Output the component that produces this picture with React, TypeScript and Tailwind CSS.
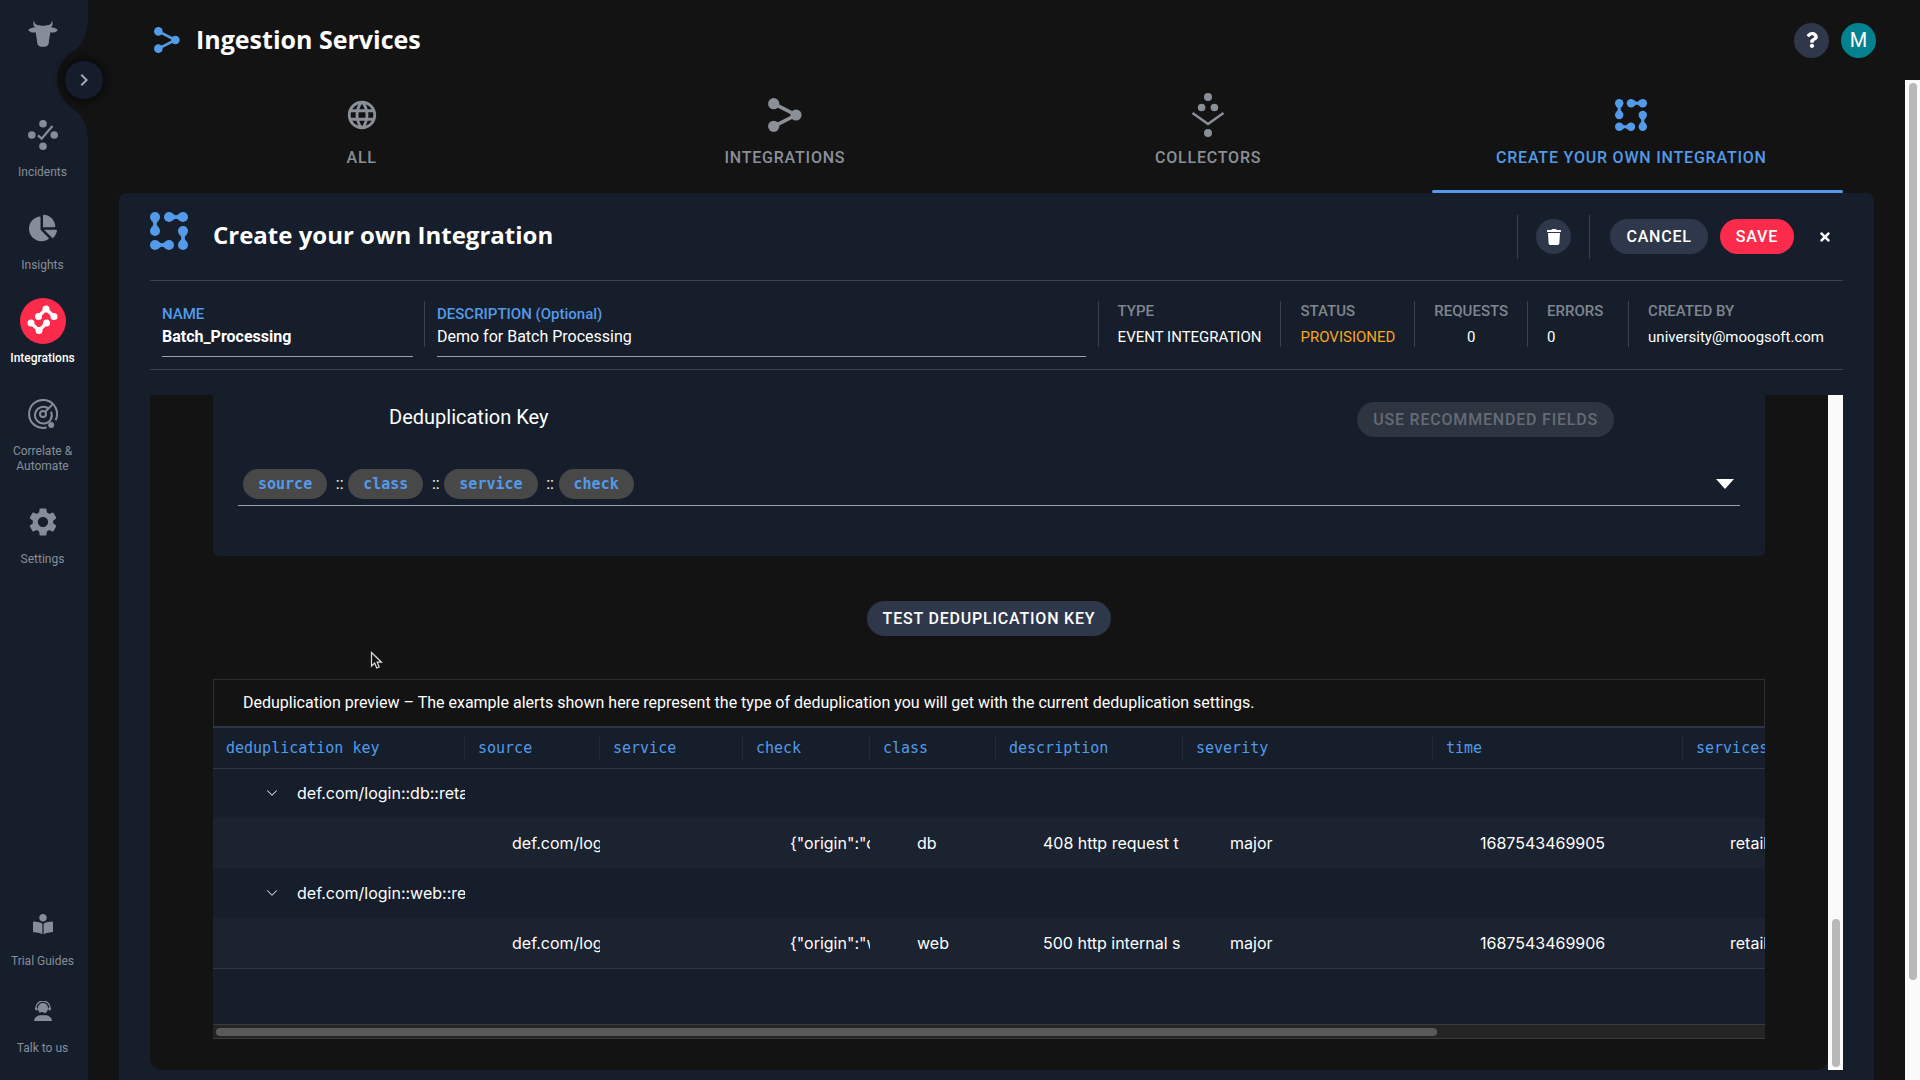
import React from "react";
import { FaBookReader, FaChartPie, FaQuestion, FaTimes, FaTrash } from "react-icons/fa";
import { MdChevronRight, MdLanguage, MdSettings } from "react-icons/md";
import { BsChevronDown } from "react-icons/bs";

function BullLogo() {
  return (
    <svg width="30" height="28" viewBox="0 0 30 28" fill="currentColor" aria-hidden="true">
      <path d="M6 0.5C4.6 4 5.6 6.6 7.6 7.2C6 7.2 4.6 7.4 3.4 8C1.8 8.6 .6 9.4 .3 10C2 12.6 5 13 7.6 12.2C8.2 15.6 9 20 9.3 23.4C9.6 25.8 12 26.8 15 26.8C18 26.8 20.4 25.8 20.7 23.4C21 20 21.8 15.6 22.4 12.2C25 13 28 12.6 29.7 10C29.4 9.4 28.2 8.6 26.6 8C25.4 7.4 24 7.2 22.4 7.2C24.4 6.6 25.4 4 24 .5C23.6 3 22.6 4.6 20.6 5C18.4 5.4 17 5.8 15 5.8C13 5.8 11.6 5.4 9.4 5C7.4 4.6 6.4 3 6 .5Z" />
    </svg>
  );
}

function IncidentsIcon() {
  return (
    <svg width="30" height="30" viewBox="0 0 30 30" fill="currentColor" aria-hidden="true">
      <circle cx="15" cy="3.8" r="3.8" />
      <circle cx="3.8" cy="15" r="3.8" />
      <circle cx="26.2" cy="15" r="3.8" />
      <circle cx="15" cy="26.2" r="3.8" />
      <path d="M10 15.4L13.6 18.6L24.5 6" fill="none" stroke="currentColor" strokeWidth="2.2" />
    </svg>
  );
}

function IntegrationsBadge() {
  return (
    <svg width="46" height="46" viewBox="0 0 46 46" aria-hidden="true">
      <circle cx="23" cy="23" r="23" fill="#fc2b4b" />
      <g fill="#fff" stroke="#fff" strokeWidth="3.4" strokeLinejoin="round">
        <path d="M18.5 18.5L26 11L34 18.5" fill="none" />
        <path d="M11 25L19 32.5L26.5 25" fill="none" />
        <circle cx="18.5" cy="18.5" r="1.8" />
        <circle cx="26" cy="11" r="1.8" />
        <circle cx="34" cy="18.5" r="1.8" />
        <circle cx="11" cy="25" r="1.8" />
        <circle cx="19" cy="32.5" r="1.8" />
        <circle cx="26.5" cy="25" r="1.8" />
      </g>
    </svg>
  );
}

function RadarIcon() {
  return (
    <svg width="30" height="30" viewBox="0 0 30 30" fill="none" stroke="currentColor" strokeWidth="2" aria-hidden="true">
      <path d="M18.6 28.5A14 14 0 1 1 27.6 21.2" />
      <path d="M20.6 9.6A8.4 8.4 0 1 0 23 12.6" />
      <circle cx="15" cy="15" r="3" />
      <path d="M17.2 12.8L24.6 5.4" />
      <circle cx="23.2" cy="26" r="3" fill="currentColor" stroke="none" />
    </svg>
  );
}

function AgentIcon() {
  return (
    <svg width="18" height="20" viewBox="0 0 18 20" fill="currentColor" aria-hidden="true">
      <path d="M0 20C.3 16.4 3 14.6 6 14.2H12C15 14.6 17.7 16.4 18 20Z" />
      <path d="M2 8.5V7A7 7 0 0 1 16 7V9" fill="none" stroke="currentColor" strokeWidth="1.3" />
      <path d="M4 7A5 5 0 0 1 14 7C14 9 13 11 11.5 12H9.5V11H7L6 12C4.6 11 4 9 4 7Z" />
      <circle cx="2.4" cy="8" r="1.4" />
      <circle cx="15.6" cy="8" r="1.4" />
    </svg>
  );
}

function FlowIcon({ className }: { className: string }) {
  return (
    <svg className={className} viewBox="0 0 34 34" fill="currentColor" aria-hidden="true">
      <path d="M5.7 5.7L28 17L5.7 28.3" fill="none" stroke="currentColor" strokeWidth="3.6" />
      <circle cx="5.7" cy="5.7" r="5.6" />
      <circle cx="28" cy="17" r="5.6" />
      <circle cx="5.7" cy="28.3" r="5.6" />
    </svg>
  );
}

function CollectorIcon() {
  return (
    <svg width="34" height="44" viewBox="0 0 34 44" fill="currentColor" aria-hidden="true">
      <circle cx="17" cy="4" r="4" />
      <circle cx="10.6" cy="14.5" r="3.8" />
      <circle cx="23.4" cy="14.5" r="3.8" />
      <path d="M1.5 20L17 31L32.5 20" fill="none" stroke="currentColor" strokeWidth="2.5" />
      <circle cx="17" cy="40" r="4" />
    </svg>
  );
}

function CustomIcon({ className }: { className: string }) {
  return (
    <svg className={className} viewBox="0 0 38 38" fill="currentColor" aria-hidden="true">
      <circle cx="5" cy="5" r="5" />
      <circle cx="5" cy="19" r="5" />
      <path d="M1 8C4 11 4 13 1 16H9C6 13 6 11 9 8Z" />
      <circle cx="19" cy="5" r="5" />
      <circle cx="33" cy="5" r="5" />
      <path d="M22 1C25 4 27 4 30 1V9C27 6 25 6 22 9Z" />
      <circle cx="33" cy="19" r="5" />
      <circle cx="33" cy="33" r="5" />
      <path d="M29 22C32 25 32 27 29 30H37C34 27 34 25 37 22Z" />
      <circle cx="5" cy="33" r="5" />
      <circle cx="19" cy="33" r="5" />
      <path d="M8 29C11 32 13 32 16 29V37C13 34 11 34 8 37Z" />
    </svg>
  );
}

function NavItem({ icon, label, active, small }: { icon: React.ReactNode; label: string; active?: boolean; small?: boolean }) {
  return (
    <a
      href="#"
      className={
        "flex w-full flex-col items-center text-center text-xs leading-[15px] " +
        (active ? "font-medium text-white" : "text-[#868d99]")
      }
    >
      <span className={"flex items-center justify-center " + (small ? "h-9" : "h-12")}>{icon}</span>
      <span className={"w-[72px] " + (small ? "mt-3" : "mt-1.5")}>{label}</span>
    </a>
  );
}

function Sidebar() {
  return (
    <aside className="relative z-10 flex w-[88px] shrink-0 flex-col items-center bg-[#161e2b] pr-[3px] text-[#868d99]">
      <svg className="absolute top-0 right-0" width="34" height="160" viewBox="0 0 34 160" aria-hidden="true">
        <path d="M34 18C33 38 28 46 18 52C7 59 3 69 3 80C3 91 8 101 18 108C29 116 34 124 34 142Z" fill="#131313" />
      </svg>
      <button
        aria-label="Expand menu"
        className="absolute top-[61px] -right-[15px] flex size-[38px] items-center justify-center rounded-full bg-[#151d2c] text-2xl text-[#a4aab4] shadow-[0_0_8px_3px_#0a0a0a]"
      >
        <MdChevronRight />
      </button>
      <div className="mt-5">
        <BullLogo />
      </div>
      <nav className="mt-[63px] flex w-full flex-1 flex-col">
        <div className="flex flex-col gap-6">
          <NavItem icon={<IncidentsIcon />} label="Incidents" />
          <NavItem icon={<FaChartPie className="text-[28px]" />} label="Insights" />
          <NavItem icon={<IntegrationsBadge />} label="Integrations" active />
          <NavItem icon={<RadarIcon />} label="Correlate & Automate" />
          <NavItem icon={<MdSettings className="text-[34px]" />} label="Settings" />
        </div>
        <div className="mt-auto mb-6 flex flex-col gap-6">
          <NavItem small icon={<FaBookReader className="text-xl" />} label="Trial Guides" />
          <NavItem small icon={<AgentIcon />} label="Talk to us" />
        </div>
      </nav>
    </aside>
  );
}

function Header() {
  return (
    <header className="flex h-20 shrink-0 items-center pr-11 pl-[66px]">
      <FlowIcon className="size-[26px] text-[#539ae8]" />
      <h1 className="ml-4 font-['Open_Sans',sans-serif] text-[25px] font-bold">Ingestion Services</h1>
      <div className="ml-auto flex gap-3">
        <button aria-label="Help" className="flex size-[35px] items-center justify-center rounded-full bg-[#2e384a] text-base">
          <FaQuestion />
        </button>
        <button aria-label="Account" className="flex size-[35px] items-center justify-center rounded-full bg-[#03818f] text-xl">
          M
        </button>
      </div>
    </header>
  );
}

const tabs = [
  { label: "ALL", icon: <MdLanguage className="text-[34px]" /> },
  { label: "INTEGRATIONS", icon: <FlowIcon className="size-[34px]" /> },
  { label: "COLLECTORS", icon: <CollectorIcon /> },
  { label: "CREATE YOUR OWN INTEGRATION", icon: <CustomIcon className="size-8" />, active: true },
];

function Tabs() {
  return (
    <nav className="mx-[31px] grid h-[113px] shrink-0 grid-cols-4">
      {tabs.map((tab) => (
        <button
          key={tab.label}
          className={
            "relative flex flex-col items-center pt-[11px] text-base font-medium tracking-wider whitespace-nowrap " +
            (tab.active ? "text-[#539ae8]" : "text-[#8a8f98]")
          }
        >
          <span className="flex h-12 items-center">{tab.icon}</span>
          <span className="mt-[7px]">{tab.label}</span>
          {tab.active && <span className="absolute right-0 bottom-0 left-3 h-[3px] rounded-full bg-[#539ae8]" />}
        </button>
      ))}
    </nav>
  );
}

function TitleRow() {
  return (
    <div className="flex h-[88px] shrink-0 items-center border-b border-[#3b424e]">
      <CustomIcon className="mb-3 size-[38px] text-[#539ae8]" />
      <h2 className="mb-1 ml-[25px] font-['Open_Sans',sans-serif] text-2xl font-bold">Create your own Integration</h2>
      <div className="ml-auto flex items-center">
        <div className="flex h-11 items-center border-x border-[#3b424e] px-[18px]">
          <button aria-label="Delete" className="flex size-[35px] items-center justify-center rounded-full bg-[#2e384a] text-base">
            <FaTrash />
          </button>
        </div>
        <button className="ml-5 h-[35px] rounded-full bg-[#2e384a] px-4 text-base font-medium tracking-wider">CANCEL</button>
        <button className="ml-3 h-[35px] rounded-full bg-[#fc2b4b] px-4 text-base font-medium tracking-wider">SAVE</button>
        <button aria-label="Close" className="mr-[11px] ml-6 text-sm">
          <FaTimes />
        </button>
      </div>
    </div>
  );
}

function Stat({ label, value, amber, center }: { label: string; value: string; amber?: boolean; center?: boolean }) {
  return (
    <div className={"flex h-[46px] min-w-[101px] flex-col justify-between border-l border-[#3b424e] px-[19px] " + (center ? "text-center" : "")}>
      <dt className="font-medium text-[#7f8691]">{label}</dt>
      <dd className={amber ? "text-[#f5a623]" : ""}>{value}</dd>
    </div>
  );
}

function InfoRow() {
  return (
    <div className="flex h-[89px] shrink-0 items-start border-b border-[#3b424e] pt-5 text-[15px] leading-5">
      <div className="ml-3 flex w-[251px] flex-col border-b border-[#9aa0aa]">
        <label htmlFor="name" className="mt-[3px] font-medium text-[#539ae8]">NAME</label>
        <input id="name" defaultValue="Batch_Processing" className="mt-[3px] mb-[9px] w-full bg-transparent text-base leading-5 font-bold outline-none" />
      </div>
      <div className="ml-[11px] h-[46px] w-[13px] border-l border-[#3b424e]" />
      <div className="flex flex-1 flex-col border-b border-[#9aa0aa]">
        <label htmlFor="description" className="mt-[3px] font-medium text-[#539ae8]">DESCRIPTION (Optional)</label>
        <input id="description" defaultValue="Demo for Batch Processing" className="mt-[3px] mb-[9px] w-full bg-transparent text-base leading-5 outline-none" />
      </div>
      <dl className="ml-3 flex">
        <Stat label="TYPE" value="EVENT INTEGRATION" />
        <Stat label="STATUS" value="PROVISIONED" amber />
        <Stat label="REQUESTS" value="0" center />
        <Stat label="ERRORS" value="0" />
        <Stat label="CREATED BY" value="university@moogsoft.com" />
      </dl>
    </div>
  );
}

function KeyCard() {
  const fields = ["source", "class", "service", "check"];
  return (
    <section className="h-[161px] shrink-0 rounded-b-md bg-[#161e2b] px-[25px]">
      <div className="flex items-start justify-between pt-[7px] pr-[126px] pl-[151px]">
        <h3 className="text-xl leading-[30px]">Deduplication Key</h3>
        <button disabled className="h-[35px] rounded-full bg-[#2e3540] px-4 text-base font-medium tracking-wider text-[#646b76]">
          USE RECOMMENDED FIELDS
        </button>
      </div>
      <div className="mt-8 flex items-center border-b border-[#9aa0aa] pr-1.5 pb-1.5 pl-[5px]">
        {fields.map((field, i) => (
          <React.Fragment key={field}>
            {i > 0 && <span className="w-[21px] pl-1 text-center">::</span>}
            <span className="flex h-[30px] items-center rounded-full bg-[#484848] px-[15px] font-['DejaVu_Sans_Mono',monospace] text-[15px] font-bold text-[#539ae8]">
              {field}
            </span>
          </React.Fragment>
        ))}
        <button aria-label="Choose fields" className="ml-auto">
          <svg width="18" height="10" viewBox="0 0 18 10" fill="#fff" aria-hidden="true">
            <path d="M0 0H18L9 10Z" />
          </svg>
        </button>
      </div>
    </section>
  );
}

const columns = ["deduplication key", "source", "service", "check", "class", "description", "severity", "time", "services"];

const groups = [
  {
    key: "def.com/login::db::retail",
    cells: ["", "def.com/log", "", '{"origin":"db"}', "db", "408 http request t", "major", "1687543469905", "retail"],
  },
  {
    key: "def.com/login::web::re",
    cells: ["", "def.com/log", "", '{"origin":"web"}', "web", "500 http internal s", "major", "1687543469906", "retail"],
  },
];

function Preview() {
  return (
    <section className="flex flex-col overflow-hidden">
      <p className="h-[47px] border border-b-0 border-[#2b2d2f] pl-[29px] text-base leading-[46px]">
        Deduplication preview – The example alerts shown here represent the type of deduplication you will get with the current deduplication settings.
      </p>
      <div className="h-[298px] overflow-hidden bg-[#161e2b]">
        <table className="w-[1720px] table-fixed border-collapse">
          <colgroup>
            <col className="w-[252px]" />
            <col className="w-[135px]" />
            <col className="w-[143px]" />
            <col className="w-[127px]" />
            <col className="w-[126px]" />
            <col className="w-[187px]" />
            <col className="w-[250px]" />
            <col className="w-[250px]" />
            <col className="w-[250px]" />
          </colgroup>
          <thead>
            <tr className="h-[41px] border-t-2 border-b border-t-[#2e3744] border-b-[#2e3744]">
              {columns.map((c) => (
                <th key={c} scope="col" className="p-0 text-left font-['DejaVu_Sans_Mono',monospace] text-[15px] font-normal text-[#539ae8]">
                  <div className="flex h-6 items-center border-r border-[#232b38] pl-[13px]">{c}</div>
                </th>
              ))}
            </tr>
          </thead>
          <tbody className="font-['Inter',sans-serif] text-base">
            {groups.map((g) => (
              <React.Fragment key={g.key}>
                <tr className="h-[50px]">
                  <td className="p-0">
                    <div className="flex items-center overflow-hidden pl-[53px] whitespace-nowrap">
                      <button aria-label="Collapse group" className="mr-[19px] text-xs">
                        <BsChevronDown />
                      </button>
                      {g.key}
                    </div>
                  </td>
                  <td colSpan={8} />
                </tr>
                <tr className="h-[50px] bg-[#1b2230] last:border-b last:border-[#2e3744]">
                  {g.cells.map((c, i) => (
                    <td key={i} className="p-0">
                      <div className="overflow-hidden pl-[47px] whitespace-nowrap">{c}</div>
                    </td>
                  ))}
                </tr>
              </React.Fragment>
            ))}
          </tbody>
        </table>
      </div>
      <div className="flex h-[15px] items-center border-y border-[#3a3a3a] bg-[#242424] px-[3px]">
        <div className="h-2 w-[79%] rounded-full bg-[#5a5a5a]" />
      </div>
    </section>
  );
}

export default function App() {
  return (
    <div className="relative flex h-screen overflow-hidden bg-[#131313] font-['Roboto',sans-serif] text-white">
      <Sidebar />
      <div className="flex min-w-0 flex-1 flex-col">
        <Header />
        <div className="flex min-h-0 flex-1">
          <main className="flex min-w-0 flex-1 flex-col px-[31px]">
            <Tabs />
            <div className="flex min-h-0 flex-1 flex-col rounded-t-lg bg-[#161e2b] px-[31px] pb-2.5">
              <TitleRow />
              <InfoRow />
              <div className="mt-[25px] flex min-h-0 flex-1">
                <div className="relative flex min-w-0 flex-1 flex-col rounded-b-xl bg-[#131313] px-[63px]">
                  <KeyCard />
                  <button className="mt-[45px] mb-[43px] h-[35px] shrink-0 self-center rounded-full bg-[#2e384a] px-4 text-base font-medium tracking-wider">
                    TEST DEDUPLICATION KEY
                  </button>
                  <Preview />
                  <svg className="absolute top-[256px] left-[220px]" width="13" height="19" viewBox="0 0 13 19" aria-hidden="true">
                    <path d="M1.5 1.5V15L4.7 12L6.7 17L9.2 16L7.2 11.2H11.5Z" fill="#111" stroke="#ddd" strokeWidth="1.2" />
                  </svg>
                </div>
                <div className="flex w-[15px] shrink-0 flex-col items-center justify-end bg-[#fafafa] pb-[3px]">
                  <div className="h-[22%] w-2 rounded-full bg-[#b8b8b8]" />
                </div>
              </div>
            </div>
          </main>
          <div className="flex w-[15px] shrink-0 flex-col items-center bg-[#fafafa] pt-[3px]">
            <div className="h-[90%] w-2 rounded-full bg-[#b8b8b8]" />
          </div>
        </div>
      </div>
    </div>
  );
}
